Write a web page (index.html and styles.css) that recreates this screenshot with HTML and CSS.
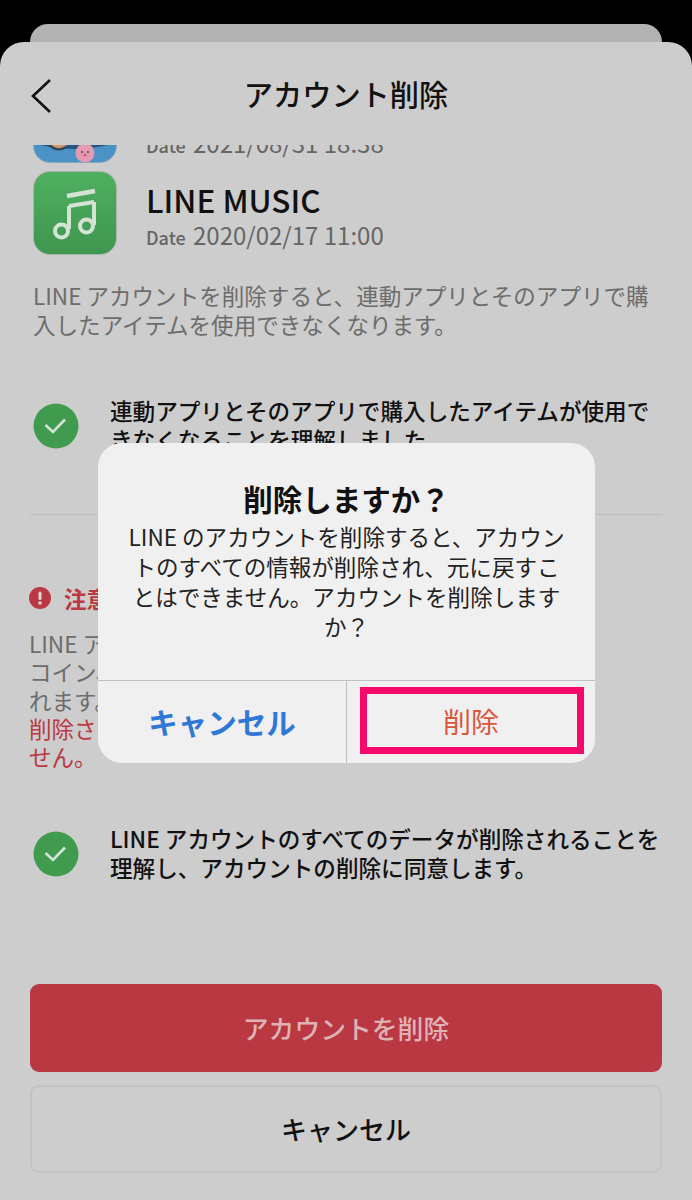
FILE: index.html
```html
<!DOCTYPE html>
<html lang="ja">
<head>
    <meta charset="UTF-8">
    <title>アカウント削除</title>
    <link rel="stylesheet" href="styles.css">
</head>
<body>
    <div class="screen">
        <div class="backCard"></div>
        <div class="sheet">
            <header class="sheetHeader">
                <svg class="backIcon" width="24" height="36" viewBox="0 0 24 36">
                    <path d="M20 2 L3 18 L20 34" fill="none" stroke="#111" stroke-width="2.6"/>
                </svg>
                <h1>アカウント削除</h1>
            </header>

            <div class="appList">
                <div class="appRow appRowCut">
                    <div class="appIcon appIconGame">
                        <svg width="84" height="84" viewBox="0 0 84 84">
                            <path d="M0 60 H84 V64 Q60 70 42 70 Q20 70 0 64 Z" fill="#27557f"/>
                            <path d="M14 62 Q24 74 34 66 L34 62 Z" fill="#d39a6a"/>
                            <path d="M16 66 Q25 74 33 68" fill="none" stroke="#3a4050" stroke-width="2"/>
                            <circle cx="52" cy="74" r="9.500" fill="#e59ab4"/>
                            <circle cx="49" cy="73" r="1" fill="#444"/>
                            <circle cx="55" cy="73" r="1" fill="#444"/>
                            <circle cx="52" cy="76" r="1.500" fill="#c9607f"/>
                        </svg>
                    </div>
                    <div class="appText">
                        <div class="appName">LINE ポコパン</div>
                        <div class="appDate"><span>Date</span> 2021/08/31 18:38</div>
                    </div>
                </div>
                <div class="appRow">
                    <div class="appIcon appIconMusic">
                        <svg width="84" height="84" viewBox="0 0 84 84" fill="none" stroke="#d5e3d5" stroke-width="4">
                            <path d="M34 25 L62 20" stroke-width="4.500"/>
                            <path d="M36 35 L61 31"/>
                            <path d="M36 35 V58"/>
                            <path d="M61 31 V54"/>
                            <circle cx="28.500" cy="60" r="6.500"/>
                            <circle cx="53.500" cy="55" r="6.500"/>
                        </svg>
                    </div>
                    <div class="appText">
                        <div class="appName">LINE MUSIC</div>
                        <div class="appDate"><span>Date</span> 2020/02/17 11:00</div>
                    </div>
                </div>
            </div>

            <p class="note">LINE アカウントを削除すると、連動アプリとそのアプリで購<br>入したアイテムを使用できなくなります。</p>

            <div class="agree agreeFirst">
                <svg class="check" width="46" height="46" viewBox="0 0 46 46">
                    <circle cx="23" cy="23" r="22.500" fill="#419b4e"/>
                    <path d="M12.500 22 L20 29 L32 16.500" fill="none" stroke="#d5e3d5" stroke-width="2.600"/>
                </svg>
                <p>連動アプリとそのアプリで購入したアイテムが使用で<br>きなくなることを理解しました。</p>
            </div>

            <hr class="rule">

            <div class="warning">
                <div class="warningTitle">
                    <svg width="22" height="22" viewBox="0 0 22 22">
                        <circle cx="11" cy="11" r="11" fill="#b93842"/>
                        <rect x="9.500" y="4.500" width="3" height="8.500" rx="1.500" fill="#d8d8d8"/>
                        <circle cx="11" cy="16" r="1.800" fill="#d8d8d8"/>
                    </svg>
                    <span>注意事項</span>
                </div>
                <p>LINE アカウントを削除すると、友だち、トーク履歴、<br>コイン、購入したスタンプなどのデータが全て削除さ<br>れます。<br><span class="warningRed">削除されたアカウントは元に戻すことができま<br>せん。</span></p>
            </div>

            <div class="agree agreeSecond">
                <svg class="check" width="46" height="46" viewBox="0 0 46 46">
                    <circle cx="23" cy="23" r="22.500" fill="#419b4e"/>
                    <path d="M12.500 22 L20 29 L32 16.500" fill="none" stroke="#d5e3d5" stroke-width="2.600"/>
                </svg>
                <p>LINE アカウントのすべてのデータが削除されることを<br>理解し、アカウントの削除に同意します。</p>
            </div>

            <div class="actions">
                <button class="btn btnDelete">アカウントを削除</button>
                <button class="btn btnCancel">キャンセル</button>
            </div>
        </div>

        <div class="dialog">
            <div class="dialogBody">
                <h2>削除しますか？</h2>
                <p>LINE のアカウントを削除すると、アカウン<br>トのすべての情報が削除され、元に戻すこ<br>とはできません。アカウントを削除します<br>か？</p>
            </div>
            <div class="dialogButtons">
                <div class="dialogBtn dialogCancel">キャンセル</div>
                <div class="dialogBtn dialogDelete">削除</div>
            </div>
            <div class="marker"></div>
        </div>
    </div>
</body>
</html>
```

FILE: styles.css
```css
* {
    box-sizing: border-box;
}

html, body {
    margin: 0;
    background: #000;
}

body {
    font-family: "Noto Sans CJK JP", "Noto Sans", sans-serif;
    color: #111;
}

.screen {
    position: relative;
    width: 692px;
    height: 1200px;
    padding-top: 24px;
    overflow: hidden;
}

.backCard {
    height: 40px;
    margin: 0 30px -22px;
    background: #b2b2b2;
    border-radius: 18px 18px 0 0;
}

.sheet {
    position: relative;
    height: 1158px;
    padding: 0 30px;
    background: #cdcdcd;
    border-radius: 24px 24px 0 0;
}

.sheetHeader {
    display: flex;
    align-items: center;
    justify-content: center;
    position: relative;
    height: 103px;
}

.sheetHeader h1 {
    margin: 0;
    font-size: 29.200px;
    font-weight: 500;
    line-height: 103px;
}

.backIcon {
    position: absolute;
    left: 0;
    top: 36px;
}

.appList {
    height: 112px;
    overflow: hidden;
    padding-left: 3px;
}

.appRow {
    display: flex;
    align-items: center;
    gap: 29px;
    height: 84px;
    margin-bottom: 8px;
}

.appRowCut {
    margin-top: -66px;
}

.appIcon {
    width: 84px;
    height: 84px;
    border-radius: 17px;
    flex: none;
    border: 1px solid #a9b3a9;
    overflow: hidden;
}

.appIcon svg {
    display: block;
    margin: -1px;
}

.appIconGame {
    background: linear-gradient(#3f88bb, #4c93c8);
    border-color: #8fa6b8;
}

.appIconMusic {
    background: linear-gradient(#4faf60, #3f9650);
}

.appText {
    padding-top: 7px;
}

.appName {
    font-size: 31.500px;
    font-weight: 500;
    line-height: 38px;
    color: #111;
}

.appDate {
    font-size: 24px;
    line-height: 34px;
    color: #666;
}

.appDate span {
    font-size: 18px;
    font-weight: 500;
    margin-right: 2px;
}

.note {
    margin: 24px 0 0 3px;
    font-size: 22.550px;
    line-height: 29px;
    color: #6c6c6c;
    white-space: nowrap;
}

.agree {
    display: flex;
    align-items: center;
    gap: 31px;
    padding-left: 3px;
}

.agree p {
    margin: 0 0 2px;
    font-size: 22.600px;
    font-weight: 500;
    line-height: 29px;
    white-space: nowrap;
    color: #111;
}

.agreeFirst {
    margin-top: 57px;
}

.rule {
    margin: 58px 0 0;
    border: 0;
    border-top: 1px solid #bcbcbc;
}

.warning {
    margin-top: 68px;
}

.warningTitle {
    display: flex;
    align-items: center;
    gap: 13px;
    color: #b93842;
    font-size: 22.500px;
    font-weight: 700;
    line-height: 30px;
    margin-left: -1px;
}

.warning p {
    margin: 16px 0 0 -1px;
    font-size: 22.550px;
    line-height: 28.300px;
    color: #6c6c6c;
    white-space: nowrap;
}

.warningRed {
    color: #b93842;
}

.agreeSecond {
    margin-top: 54px;
}

.actions {
    position: absolute;
    left: 30px;
    right: 30px;
    top: 942px;
    display: flex;
    flex-direction: column;
    gap: 13px;
}

.btn {
    display: block;
    width: 100%;
    height: 88px;
    border-radius: 9px;
    font-family: inherit;
    font-weight: 500;
    padding: 0 0 2px;
}

.btnDelete {
    border: 0;
    background: #b93842;
    color: #dfb3b6;
    font-size: 25.800px;
}

.btnCancel {
    border: 2px solid #c3c3c3;
    background: transparent;
    color: #111;
    font-size: 26px;
}

.dialog {
    position: absolute;
    left: 98px;
    top: 443px;
    width: 497px;
    height: 320px;
    display: flex;
    flex-direction: column;
    background: #f0f0f1;
    border-radius: 24px;
}

.dialogBody {
    height: 238px;
    padding-top: 33px;
    text-align: center;
    border-bottom: 1px solid #bfbfbf;
}

.dialogBody h2 {
    margin: 0;
    font-size: 29.500px;
    font-weight: 700;
    line-height: 44px;
    color: #111;
}

.dialogBody p {
    margin: 0;
    padding-top: 1px;
    font-size: 22.550px;
    line-height: 30px;
    color: #222;
    white-space: nowrap;
}

.dialogButtons {
    display: flex;
    flex: 1;
}

.dialogBtn {
    display: flex;
    flex: 1;
    align-items: center;
    justify-content: center;
    padding-bottom: 3px;
}

.dialogCancel {
    flex: 0 0 249px;
    border-right: 1px solid #bfbfbf;
    color: #2f78d6;
    font-size: 29.500px;
    font-weight: 700;
}

.dialogDelete {
    color: #d9583c;
    font-size: 28px;
}

.marker {
    position: absolute;
    left: 262px;
    top: 244px;
    width: 224px;
    height: 67px;
    border: 7px solid #f50a6c;
}
```
